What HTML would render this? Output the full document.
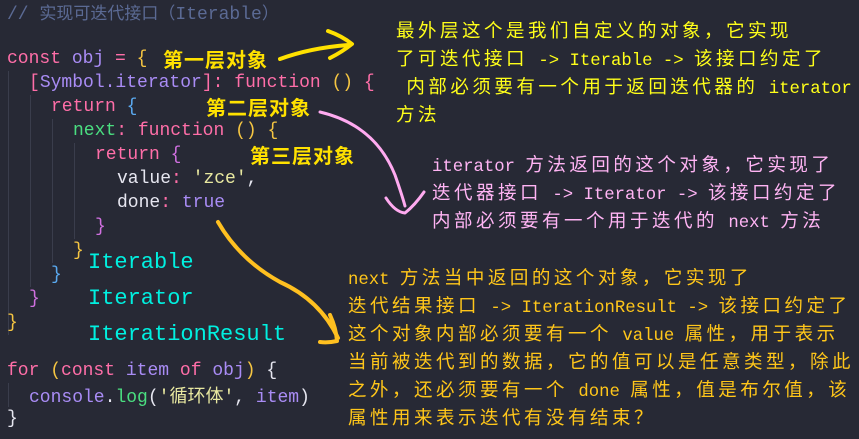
<!DOCTYPE html>
<html><head><meta charset="utf-8"><style>
body{margin:0;width:859px;height:439px;background:#272935;overflow:hidden;position:relative;font-family:"Liberation Mono","Noto Sans CJK SC",monospace;}
.l{position:absolute;white-space:pre;font-size:18px;line-height:24px;color:#e6e6f0;}
.k{color:#ff6ea8}.p{color:#a98cf5}.y{color:#f5c542}.g{color:#4ade80}.s{color:#e8e8a0}.c{color:#5b6a94}.b{color:#5aa9f0}.m{color:#d070e0}
.a{position:absolute;white-space:pre;font-size:17.3px;line-height:28px;}
.a div{height:28px;line-height:28px;}
.a i{font-style:normal;font-size:18.5px;letter-spacing:3.5px;font-family:"Noto Sans CJK SC",sans-serif;line-height:1;vertical-align:baseline;}
.lab{position:absolute;font-family:"Noto Sans CJK SC",sans-serif;font-size:20px;font-weight:bold;color:#ffe100;letter-spacing:1px;line-height:24px;}
.cy{position:absolute;color:#00f0e0;font-size:22px;line-height:36px;white-space:pre;}
.gd{position:absolute;width:1px;background:#3a3d4c;}
</style></head><body>
<div class="gd" style="left:8px;top:71px;height:264px"></div>
<div class="gd" style="left:30px;top:95px;height:192px"></div>
<div class="gd" style="left:52px;top:119px;height:144px"></div>
<div class="gd" style="left:74px;top:143px;height:96px"></div>
<div class="gd" style="left:8px;top:383px;height:24px"></div>
<div class="l c" style="left:7px;top:0">// <span style="font-family:'Noto Sans CJK SC';font-size:17px">实现可迭代接口（</span>Iterable<span style="font-family:'Noto Sans CJK SC';font-size:17px">）</span></div>
<div class="l" style="left:7px;top:47px"><span class="k">const</span> <span class="p">obj</span> <span class="k">=</span> <span class="y">{</span></div>
<div class="l" style="left:29px;top:71px"><span class="k">[</span><span class="p">Symbol.iterator</span><span class="k">]:</span> <span class="k">function</span> <span class="y">()</span> <span class="k">{</span></div>
<div class="l" style="left:51px;top:95px"><span class="k">return</span> <span class="b">{</span></div>
<div class="l" style="left:73px;top:119px"><span class="g">next</span><span class="k">:</span> <span class="k">function</span> <span class="y">() {</span></div>
<div class="l" style="left:95px;top:143px"><span class="k">return</span> <span class="m">{</span></div>
<div class="l" style="left:117px;top:167px">value<span class="k">:</span> <span class="s">'zce'</span>,</div>
<div class="l" style="left:117px;top:191px">done<span class="k">:</span> <span class="p">true</span></div>
<div class="l m" style="left:95px;top:215px">}</div>
<div class="l y" style="left:73px;top:239px">}</div>
<div class="l b" style="left:51px;top:263px">}</div>
<div class="l m" style="left:29px;top:287px">}</div>
<div class="l y" style="left:7px;top:311px">}</div>
<div class="l" style="left:7px;top:359px"><span class="k">for</span> <span class="y">(</span><span class="k">const</span> <span class="p">item</span> <span class="k">of</span> <span class="p">obj</span><span class="y">)</span> {</div>
<div class="l" style="left:29px;top:383px"><span class="p">console</span>.<span class="g">log</span>(<span class="s">'<span style="font-family:'Noto Sans CJK SC'">循环体</span>'</span>, <span class="p">item</span>)</div>
<div class="l" style="left:7px;top:407px">}</div>

<div class="lab" style="left:163px;top:47px">第一层对象</div>
<div class="lab" style="left:206px;top:95px">第二层对象</div>
<div class="lab" style="left:250px;top:143px">第三层对象</div>

<div class="cy" style="left:88px;top:245px">Iterable</div>
<div class="cy" style="left:88px;top:281px">Iterator</div>
<div class="cy" style="left:88px;top:317px">IterationResult</div>

<div class="a" style="left:396px;top:20px;color:#ffff1a"><div><i>最外层这个是我们自定义的对象，它实现</i></div><div><i>了可迭代接口</i> -&gt; Iterable -&gt; <i>该接口约定了</i></div><div> <i>内部必须要有一个用于返回迭代器的</i> iterator</div><div><i>方法</i></div></div>
<div class="a" style="left:432px;top:154px;color:#ffb4f4"><div>iterator <i>方法返回的这个对象，它实现了</i></div><div><i>迭代器接口</i> -&gt; Iterator -&gt; <i>该接口约定了</i></div><div><i>内部必须要有一个用于迭代的</i> next <i>方法</i></div></div>
<div class="a" style="left:348px;top:267px;color:#ffc61a"><div>next <i>方法当中返回的这个对象，它实现了</i></div><div><i>迭代结果接口</i> -&gt; IterationResult -&gt; <i>该接口约定了</i></div><div><i>这个对象内部必须要有一个</i> value <i>属性，用于表示</i></div><div><i>当前被迭代到的数据，它的值可以是任意类型，除此</i></div><div><i>之外，还必须要有一个</i> done <i>属性，值是布尔值，该</i></div><div><i>属性用来表示迭代有没有结束？</i></div></div>

<svg width="859" height="439" style="position:absolute;left:0;top:0" fill="none" stroke-linecap="round" stroke-linejoin="round">
<path d="M280 59 Q310 48 348 45 M328 31 Q342 36 352 44 Q342 52 330 58" stroke="#ffe100" stroke-width="4"/>
<path d="M320 112 Q375 125 395 175 Q402 195 405 206 M386 198 Q395 212 405 213 Q415 205 424 192" stroke="#ffaaf0" stroke-width="3"/>
<path d="M218 222 Q240 260 280 282 Q320 300 338 338 M330 315 Q336 328 337 341 Q328 343 320 342" stroke="#ffc020" stroke-width="4"/>
</svg>
</body></html>
